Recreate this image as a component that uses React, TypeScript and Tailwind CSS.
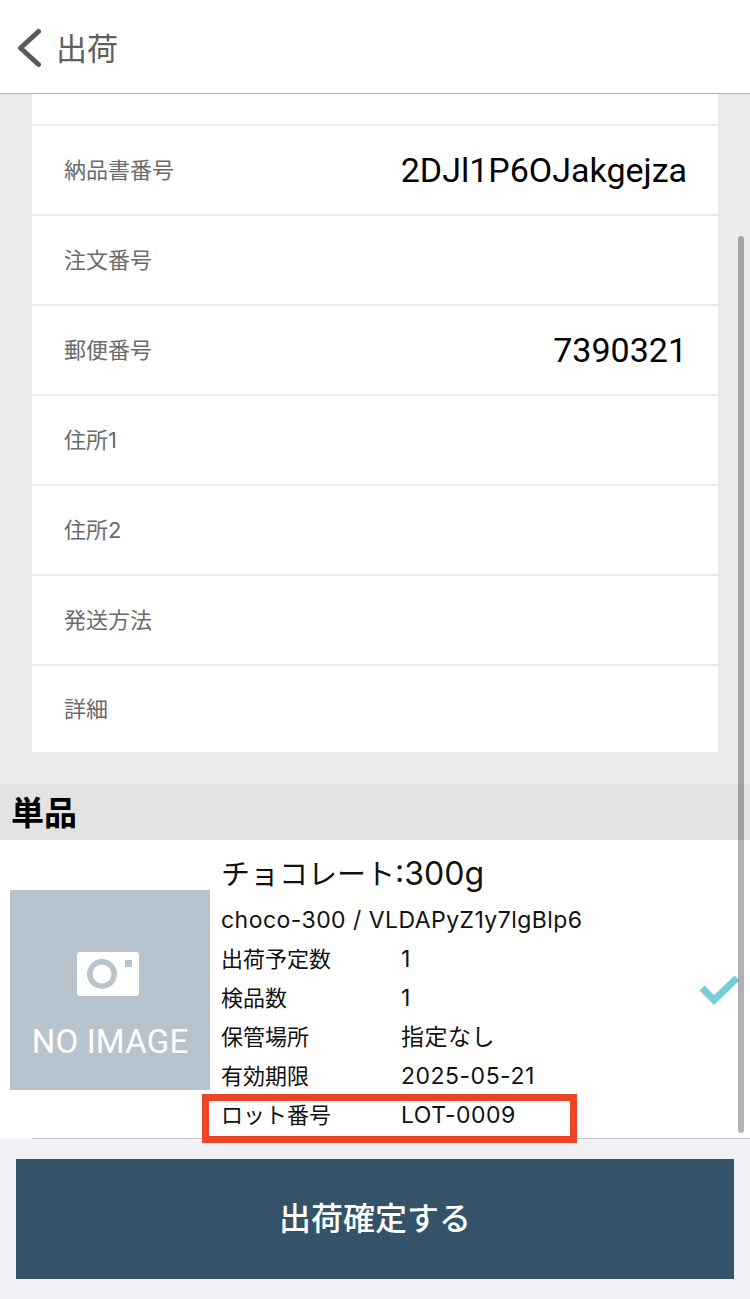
import React from 'react';

const font = { fontFamily: '"Inter", "Noto Sans CJK JP", sans-serif' };

const orderRows = [
  { label: '納品書番号', value: '2DJl1P6OJakgejza' },
  { label: '注文番号', value: '' },
  { label: '郵便番号', value: '7390321' },
  { label: '住所1', value: '' },
  { label: '住所2', value: '' },
  { label: '発送方法', value: '' },
];

const itemRows = [
  { label: '出荷予定数', value: '1' },
  { label: '検品数', value: '1' },
  { label: '保管場所', value: '指定なし' },
  { label: '有効期限', value: '2025-05-21' },
  { label: 'ロット番号', value: 'LOT-0009' },
];

const NoImage = () => (
  <div className="w-[200px] h-[200px] bg-[#b7c4cd] flex flex-col items-center shrink-0">
    <svg width="62" height="44" viewBox="0 0 62 44" className="mt-[62px] ml-[-4px]">
      <rect width="62" height="44" rx="3" fill="#fff" />
      <circle cx="25" cy="22" r="15" fill="#b7c4cd" />
      <circle cx="25" cy="22" r="9.5" fill="#fff" />
      <rect x="48" y="8" width="7" height="7" fill="#b7c4cd" />
    </svg>
    <span className="mt-[26px] text-[33px] leading-[40px] text-white font-['Roboto'] tracking-[0.2px]">NO IMAGE</span>
  </div>
);

export default function App() {
  return (
    <div className="relative w-[750px] h-[1299px] overflow-hidden bg-[#ebebeb] flex flex-col" style={font}>
      <header className="h-[94px] shrink-0 bg-white border-b border-[#b0b0b0] flex items-center pl-[16px]">
        <svg width="26" height="40" viewBox="0 0 26 40" className="mt-[3px]">
          <path d="M22.5 3.5 L4.5 20 L22.5 36.5" fill="none" stroke="#5a5a5a" strokeWidth="5" strokeLinecap="round" strokeLinejoin="round" />
        </svg>
        <span className="ml-[14px] text-[31px] leading-[40px] text-[#5f5f5f] mt-[5px]">出荷</span>
      </header>

      <main className="flex-1 flex flex-col">
        <section className="mx-[32px] bg-white">
          <div className="h-[30px] border-b-2 border-[#ebebeb] box-content" />
          {orderRows.map((row) => (
            <div key={row.label} className="h-[90px] border-b-2 border-[#ebebeb] flex items-center justify-between pl-[33px] pr-[31px]">
              <span className="text-[22px] text-[#6b6b6b] ml-[-1px] mt-[1px]">{row.label}</span>
              <span className="text-[34px] text-black font-['Roboto']">{row.value}</span>
            </div>
          ))}
          <div className="h-[86px] flex items-center pl-[33px]">
            <span className="text-[22px] text-[#6b6b6b] ml-[-1px] mt-[1px]">詳細</span>
          </div>
        </section>

        <h2 className="mt-[32px] h-[56px] bg-[#e3e3e3] flex items-center pl-[11px] text-[33px] font-bold text-black pt-[4px]">単品</h2>

        <section className="h-[299px] bg-white relative flex items-center pl-[10px]">
          <NoImage />
          <div className="ml-[11px] flex flex-col self-start">
            <p className="mt-[14px] h-[40px] text-[29px] leading-[40px] text-[#111]">
              チョコレート<span className="text-[32px]">:300g</span>
            </p>
            <p className="mt-[7px] h-[39px] text-[23px] leading-[39px] text-[#111] tracking-[0.45px]">choco-300 / VLDAPyZ1y7lgBlp6</p>
            {itemRows.map((row) => (
              <div key={row.label} className="h-[39px] flex items-center text-[22px] text-[#111]">
                <span className="w-[180px]">{row.label}</span>
                <span className="text-[23px] tracking-[0.5px]">{row.value}</span>
              </div>
            ))}
          </div>
          <svg width="42" height="34" viewBox="0 0 42 34" className="absolute left-[699px] top-[134px]">
            <path d="M3 14 L15 26 L38 4" fill="none" stroke="#7accd9" strokeWidth="7" />
          </svg>
          <div className="absolute left-[32px] right-0 bottom-0 h-px bg-[#c8c8c8]" />
        </section>

        <footer className="flex-1 bg-[#f0f0f5] px-[16px] pt-[20px]">
          <button className="w-[718px] h-[120px] bg-[#345268] text-white text-[32px] font-medium">出荷確定する</button>
        </footer>
      </main>

      {/* scrollbar */}
      <div className="absolute left-[738px] top-[236px] w-[6px] h-[897px] rounded-full bg-black/30" />
      {/* annotation */}
      <div className="absolute left-[202px] top-[1094px] w-[375px] h-[49px] border-[7px] border-[#ee4527]" />
    </div>
  );
}
